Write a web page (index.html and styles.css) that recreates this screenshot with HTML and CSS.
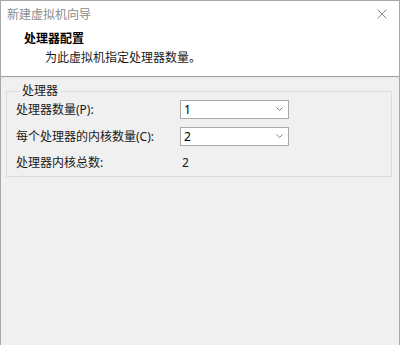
FILE: index.html
```html
<!DOCTYPE html>
<html>
    <head>
        <meta charset="utf-8">
        <title>新建虚拟机向导</title>
        <link rel="stylesheet" href="styles.css">
    </head>
    <body>
        <div id="window">
            <div id="titleBar">
                <span id="title">新建虚拟机向导</span>
                <span id="close">
                    <svg width="10" height="10" viewBox="0 0 10 10">
                        <path d="M0.5 0.5 L9.5 9.5 M9.5 0.5 L0.5 9.5" stroke="#8a8a8a" stroke-width="1" fill="none"/>
                    </svg>
                </span>
            </div>
            <div id="header">
                <h1>处理器配置</h1>
                <p>为此虚拟机指定处理器数量。</p>
            </div>
            <div id="page">
                <fieldset class="group">
                    <legend>处理器</legend>
                    <div class="row first">
                        <span class="label">处理器数量(P):</span>
                        <span class="select">
                            <span class="value">1</span>
                            <svg class="chevron" width="7" height="4" viewBox="0 0 7 4">
                                <path d="M0.5 0.5 L3.5 3.5 L6.5 0.5" stroke="#808080" fill="none"/>
                            </svg>
                        </span>
                    </div>
                    <div class="row">
                        <span class="label">每个处理器的内核数量(C):</span>
                        <span class="select">
                            <span class="value">2</span>
                            <svg class="chevron" width="7" height="4" viewBox="0 0 7 4">
                                <path d="M0.5 0.5 L3.5 3.5 L6.5 0.5" stroke="#808080" fill="none"/>
                            </svg>
                        </span>
                    </div>
                    <div class="row total">
                        <span class="label">处理器内核总数:</span>
                        <span class="totalValue">2</span>
                    </div>
                </fieldset>
            </div>
        </div>
    </body>
</html>
```

FILE: styles.css
```css
* {
    box-sizing: border-box;
}

html, body {
    margin: 0;
    padding: 0;
    width: 400px;
    height: 345px;
    overflow: hidden;
    background: #f0f0f0;
}

body {
    font-family: "Noto Sans", "Noto Sans CJK SC", sans-serif;
    font-size: 12px;
    color: #1a1a1a;
}

#window {
    width: 400px;
    height: 345px;
    border: 1px solid #a8a8a8;
    border-bottom: 0;
    display: flex;
    flex-direction: column;
    background: #f0f0f0;
}

#titleBar {
    height: 25px;
    background: #fff;
    display: flex;
    align-items: center;
    justify-content: space-between;
    padding: 0 12px 0 6px;
}

#title {
    color: #8c8c8c;
    font-size: 12px;
}

#close {
    display: flex;
}

#header {
    height: 51px;
    background: #fff;
    border-bottom: 1px solid #a0a0a0;
    padding: 4px 0 0 23px;
}

#header h1 {
    margin: 0;
    font-size: 12px;
    font-weight: 700;
    line-height: 18px;
    color: #000;
}

#header p {
    margin: 1px 0 0 21px;
    line-height: 18px;
    color: #1a1a1a;
}

#page {
    flex: 1;
    border-top: 1px solid #e8e8e8;
    padding: 5px 7px 0 5px;
}

.group {
    margin: 0;
    border: 1px solid #dcdcdc;
    padding: 0 8px 6px 9px;
    height: 94px;
}

.group legend {
    padding: 0 2px;
    margin-left: 4px;
    line-height: 16px;
}

.row {
    display: flex;
    align-items: center;
    height: 24px;
    margin-bottom: 3px;
}

.row.first {
    margin-top: -2px;
}

.row.total {
    margin-top: -1px;
}

.label {
    width: 164px;
}

.select {
    width: 109px;
    height: 19px;
    background: #fff;
    border: 1px solid #a9a9a9;
    display: flex;
    align-items: center;
    justify-content: space-between;
    padding: 0 5px 0 3px;
    color: #000;
}

.chevron {
    display: block;
}

.totalValue {
    padding-left: 2px;
}
```
